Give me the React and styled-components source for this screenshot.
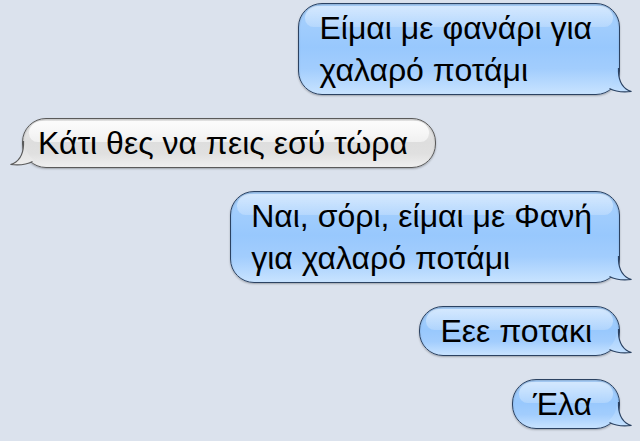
import React from "react";
import styled, { createGlobalStyle } from "styled-components";

const messages = [
  { mine: true, text: "Είμαι με φανάρι για\nχαλαρό ποτάμι" },
  { mine: false, text: "Κάτι θες να πεις εσύ τώρα" },
  { mine: true, text: "Ναι, σόρι, είμαι με Φανή\nγια χαλαρό ποτάμι" },
  { mine: true, text: "Εεε ποτακι" },
  { mine: true, text: "Έλα" },
];

const palette = {
  mine: {
    border: "#2b4262",
    tailTop: "#9ccafd",
    tailBottom: "#c8e3ff",
    body: "linear-gradient(to bottom, #aad2fd 0%, #98c8fd 48%, #a2cdfd 72%, #c8e3ff 100%)",
  },
  theirs: {
    border: "#5a5a5a",
    tailTop: "#dcdcdc",
    tailBottom: "#efefef",
    body: "linear-gradient(to bottom, #ececec 0%, #dedede 48%, #e0e0e0 72%, #efefef 100%)",
  },
};

function Tail({ mine }) {
  const c = mine ? palette.mine : palette.theirs;
  const id = mine ? "tail-mine" : "tail-theirs";
  return (
    <TailSvg $mine={mine} width="44" height="41" viewBox="0 0 44 41">
      <defs>
        <linearGradient id={id} x1="0" y1="14" x2="0" y2="40" gradientUnits="userSpaceOnUse">
          <stop offset="0" stopColor={c.tailTop} />
          <stop offset="1" stopColor={c.tailBottom} />
        </linearGradient>
      </defs>
      <path
        d="M29.5 14 L29.5 18 C30 28 34 35 42.5 37.5 C34 38.5 26 37.5 20.5 34.5 L19.5 33 A21.5 21.5 0 0 0 27.5 16 L27.5 14 Z"
        fill={`url(#${id})`}
      />
      <path
        d="M29.5 14 L29.5 18 C30 28 34 35 42.5 37.5 C34 38.5 26 37.5 20.5 34.5"
        fill="none"
        stroke={c.border}
        strokeWidth="1.2"
      />
    </TailSvg>
  );
}

export default function App() {
  return (
    <>
      <GlobalStyle />
      <Thread>
        {messages.map((m, i) => (
          <Row key={i} $mine={m.mine}>
            <Bubble $mine={m.mine}>
              <Text>{m.text}</Text>
              <Tail mine={m.mine} />
            </Bubble>
          </Row>
        ))}
      </Thread>
    </>
  );
}

const GlobalStyle = createGlobalStyle`
  html, body {
    margin: 0;
    padding: 0;
    background: #dbe2ed;
  }
  body {
    font-family: "Liberation Sans", Arial, sans-serif;
  }
`;

const Thread = styled.div`
  width: 640px;
  height: 441px;
  box-sizing: border-box;
  padding: 3px 20px 0 22px;
  display: flex;
  flex-direction: column;
  gap: 23px;
  overflow: hidden;
  background: #dbe2ed;
`;

const Row = styled.div`
  display: flex;
  justify-content: ${(p) => (p.$mine ? "flex-end" : "flex-start")};
`;

const Bubble = styled.div`
  position: relative;
  box-sizing: border-box;
  padding: ${(p) => (p.$mine ? "3px 27px 3px 20px" : "3px 27px 3px 15px")};
  border: 1px solid ${(p) => (p.$mine ? palette.mine.border : palette.theirs.border)};
  border-radius: 24px;
  background: ${(p) => (p.$mine ? palette.mine.body : palette.theirs.body)};
  box-shadow: 0 1px 2px rgba(0, 0, 0, 0.28), inset 0 1px 2px rgba(0, 0, 0, 0.18);

  &::before {
    content: "";
    position: absolute;
    top: 2px;
    left: 6px;
    right: 6px;
    height: 21px;
    border-radius: 20px 20px 14px 14px;
    background: linear-gradient(
      to bottom,
      ${(p) => (p.$mine ? "rgba(255,255,255,0.5)" : "rgba(255,255,255,0.85)")},
      ${(p) => (p.$mine ? "rgba(255,255,255,0.22)" : "rgba(255,255,255,0.55)")}
    );
  }
`;

const Text = styled.span`
  position: relative;
  display: block;
  white-space: pre-line;
  font-size: 32px;
  line-height: 42px;
  color: #000;
`;

const TailSvg = styled.svg`
  position: absolute;
  bottom: -1px;
  ${(p) => (p.$mine ? "right: -14px;" : "left: -14px; transform: scaleX(-1);")}
  overflow: visible;
`;
